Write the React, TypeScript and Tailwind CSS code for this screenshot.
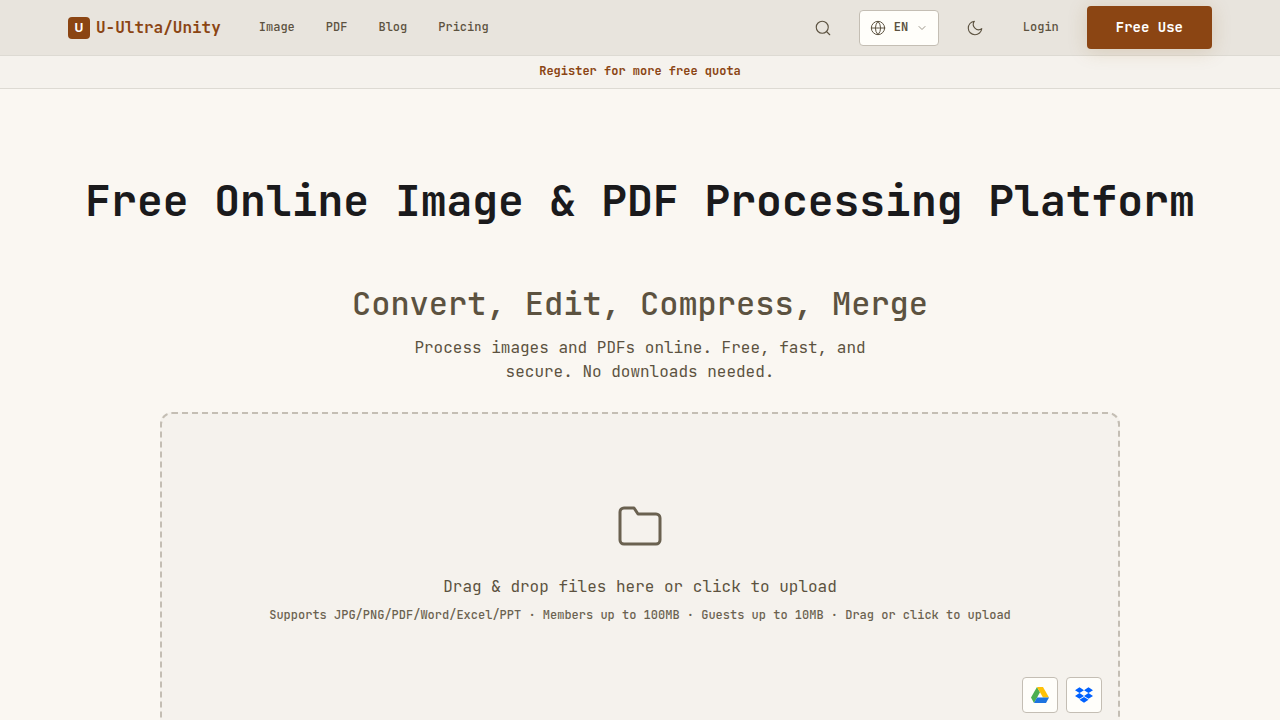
import { ChevronDown, Globe, Search } from 'lucide-react'
import { useState } from 'react'

const links = [
  { label: 'Image', href: '#image' },
  { label: 'PDF', href: '#pdf' },
  { label: 'Blog', href: '#blog' },
  { label: 'Pricing', href: '#pricing' },
]

function MoonIcon(){
  return (
    <svg viewBox="0 0 24 24" className="h-[18px] w-[18px]" fill="none" stroke="currentColor" strokeWidth="1.5" strokeLinecap="round" strokeLinejoin="round" aria-hidden="true">
      <path d="M21 12.79A9 9 0 1 1 11.21 3 7 7 0 0 0 21 12.79z" />
    </svg>
  )
}

function FolderIcon(){
  return (
    <svg viewBox="0 0 24 24" className="h-12 w-12 opacity-90" fill="none" stroke="currentColor" strokeWidth="1.5" strokeLinecap="round" strokeLinejoin="round" aria-hidden="true">
      <path d="M22 19a2 2 0 0 1-2 2H4a2 2 0 0 1-2-2V5a2 2 0 0 1 2-2h5l2 3h9a2 2 0 0 1 2 2z" />
    </svg>
  )
}

function DriveIcon(){
  return (
    <svg viewBox="0 0 18 16" className="h-4 w-[18px]" aria-hidden="true">
      <path d="M6 0 0 10.5 3 16 9 5.2Z" fill="#4caf50" />
      <path d="M6 0H12L18 10.5H12Z" fill="#ffc107" />
      <path d="M6 10.5H18L15 16H3Z" fill="#1e74e0" />
    </svg>
  )
}

function DropboxIcon(){
  return (
    <svg viewBox="0 0 24 24" className="h-[18px] w-[18px]" fill="#0061ff" aria-hidden="true">
      <path d="M6 1.8 0 5.6l6 3.8 6-3.8zM18 1.8l-6 3.8 6 3.8 6-3.8zM0 13.3l6 3.8 6-3.8-6-3.9zM18 9.4l-6 3.9 6 3.8 6-3.8zM6 18.4l6 3.8 6-3.8-6-3.8z" />
    </svg>
  )
}

function Header(){
  const [lang, setLang] = useState('EN')

  return (
    <header className="border-b border-[#dddad3] bg-[#e8e4dd]">
      <div className="mx-auto flex h-[55px] max-w-[1200px] items-center px-7">
        <a href="#home" className="flex items-center gap-1.5 text-[#8b4513]">
          <span className="flex h-[22px] w-[22px] items-center justify-center rounded bg-[#8b4513] font-['Inter',sans-serif] text-xs font-bold text-white">U</span>
          <span className="text-base font-semibold">U-Ultra/Unity</span>
        </a>
        <nav className="ml-[38px] flex items-center gap-[31px] pb-0.5 text-xs font-medium">
          {links.map(l => <a key={l.label} href={l.href}>{l.label}</a>)}
        </nav>
        <div className="ml-auto flex items-center">
          <button type="button" aria-label="Search" className="flex h-9 w-9 items-center justify-center">
            <Search size={18} strokeWidth={1.5} />
          </button>
          <label className="mx-[18px] flex h-9 items-center rounded border border-[#c4beb4] bg-[#fffefa] px-2.5">
            <Globe size={16} strokeWidth={1.5} />
            <select
              aria-label="Language"
              value={lang}
              onChange={e => setLang(e.target.value)}
              className="mr-1.5 ml-2 w-4 appearance-none bg-transparent pb-0.5 text-xs font-semibold outline-none"
            >
              <option>EN</option>
            </select>
            <ChevronDown size={12} strokeWidth={2} className="opacity-60" />
          </label>
          <button type="button" aria-label="Toggle theme" className="flex h-9 w-9 items-center justify-center">
            <MoonIcon />
          </button>
          <a href="#login" className="mr-7 ml-[30px] pb-0.5 text-xs font-medium">Login</a>
          <button type="button" className="relative h-[43px] rounded bg-[#8b4513] px-[29px] pb-0.5 text-sm font-semibold text-white shadow-[0_2px_20px_rgba(139,90,19,0.18)]">
            Free Use
          </button>
        </div>
      </div>
    </header>
  )
}

function DropZone(){
  return (
    <div className="relative mx-auto mt-7 max-w-[960px] rounded-xl border-2 border-dashed border-[#c4beb4] bg-[#f5f2ed]">
      <label className="flex min-h-[315px] flex-col items-center px-6 pt-[88px] pb-20 text-center">
        <FolderIcon />
        <span className="mt-[25px] text-base leading-6">Drag &amp; drop files here or click to upload</span>
        <span className="mt-2 text-xs leading-4 font-medium opacity-90">
          Supports JPG/PNG/PDF/Word/Excel/PPT · Members up to 100MB · Guests up to 10MB · Drag or click to upload
        </span>
        <input type="file" multiple className="sr-only" />
      </label>
      <div className="absolute right-4 bottom-4 flex gap-2">
        <button type="button" aria-label="Google Drive" className="flex h-9 w-9 items-center justify-center rounded border border-[#c4beb4] bg-[#fffefa]">
          <DriveIcon />
        </button>
        <button type="button" aria-label="Dropbox" className="flex h-9 w-9 items-center justify-center rounded border border-[#c4beb4] bg-[#fffefa]">
          <DropboxIcon />
        </button>
      </div>
    </div>
  )
}

export default function App(){
  return (
    <div className="min-h-screen bg-[#faf7f2] font-['JetBrains_Mono','DejaVu_Sans_Mono',monospace] text-[#5c5240]">
      <Header />
      <div className="flex h-[33px] items-center justify-center border-b border-[#dddad3] bg-[#f5f2ed] pb-0.5 text-xs font-semibold text-[#8b4513]">
        <a href="#register">Register for more free quota</a>
      </div>
      <main className="px-6 pt-[84px] text-center">
        <h1 className="text-[43px] leading-[56px] font-semibold text-[#1a1a1c]">Free Online Image &amp; PDF Processing Platform</h1>
        <h2 className="mt-[55px] text-[32px] leading-10 font-medium">Convert, Edit, Compress, Merge</h2>
        <p className="mx-auto mt-3 max-w-[480px] text-base leading-6">
          Process images and PDFs online. Free, fast, and secure. No downloads needed.
        </p>
        <DropZone />
      </main>
    </div>
  )
}
